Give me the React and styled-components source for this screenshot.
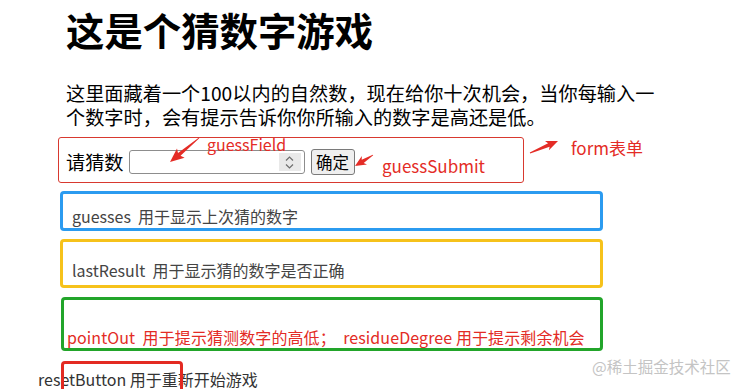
import React from "react";
import styled, { createGlobalStyle } from "styled-components";

const GlobalStyle = createGlobalStyle`
  html, body { margin: 0; padding: 0; background: #ffffff; }
  body { font-family: "Noto Sans CJK SC", "Noto Sans", sans-serif; }
`;

const FONT = `"Noto Sans CJK SC", "Noto Sans", sans-serif`;
const RED = "#e42c26";

const Page = styled.div`
  position: relative;
  width: 745px;
  height: 389px;
  overflow: hidden;
  background: #fff;
  font-family: ${FONT};
  color: #000;
  display: flex;
  flex-direction: column;
`;

const Content = styled.div`
  padding-left: 66px;
  width: 600px;
`;

const Title = styled.h1`
  margin: 6px 0 0;
  font-size: 38.4px;
  line-height: 46px;
  font-weight: 700;
`;

const Intro = styled.p`
  margin: 29px 0 0;
  font-size: 19.2px;
  line-height: 24px;
`;

const FormBox = styled.form`
  box-sizing: border-box;
  margin: 8px 0 0 58px;
  width: 466px;
  height: 47px;
  border: 1.5px solid #d8392f;
  border-radius: 3px;
  display: flex;
  align-items: center;
  padding: 5px 0 0 7px;
`;

const FieldLabel = styled.label`
  font-size: 19.2px;
  line-height: 24px;
  margin-right: 5px;
`;

const InputWrap = styled.div`
  box-sizing: border-box;
  width: 176px;
  height: 24px;
  border: 1px solid #8d8d8d;
  border-radius: 3px;
  display: flex;
  align-items: stretch;
  padding: 2px 3px 2px 2px;
  background: #fff;
`;

const NumberField = styled.input`
  flex: 1;
  min-width: 0;
  border: none;
  outline: none;
  padding: 0;
  font: inherit;
  background: transparent;
`;

const Spinner = styled.div`
  width: 22px;
  background: #e9e9e9;
  display: flex;
  flex-direction: column;
  align-items: center;
  justify-content: center;
  gap: 3px;
`;

const SubmitButton = styled.button`
  box-sizing: border-box;
  margin-left: 6px;
  width: 44px;
  height: 26px;
  padding: 0;
  border: 1px solid #7a7a7a;
  border-radius: 3px;
  background: #efefef;
  font-family: ${FONT};
  font-size: 16.5px;
  line-height: 22px;
  color: #000;
`;

const NoteBox = styled.div`
  box-sizing: border-box;
  margin: ${(p) => p.$gap}px 0 0 ${(p) => p.$left}px;
  width: ${(p) => 603 - p.$left}px;
  height: ${(p) => p.$h}px;
  border: 3px solid ${(p) => p.$color};
  border-radius: 4px;
  display: flex;
  align-items: flex-end;
  padding: 0 0 ${(p) => p.$pb}px ${(p) => p.$pl}px;
  font-size: 16px;
  line-height: 20px;
  letter-spacing: ${(p) => p.$ls || 0}px;
  color: ${(p) => p.$text || "#444"};
  white-space: pre;
`;

const ResetRow = styled.div`
  position: relative;
  margin-top: 18px;
  padding-left: 38px;
  font-size: 16px;
  line-height: 20px;
  color: #333;
  white-space: pre;
`;

const ResetMark = styled.div`
  position: absolute;
  left: 61px;
  top: -8px;
  width: 122px;
  height: 40px;
  box-sizing: border-box;
  border: 3px solid #e32a22;
  border-radius: 4px;
`;

const Watermark = styled.div`
  position: absolute;
  left: 592px;
  top: 356px;
  font-size: 15.5px;
  line-height: 20px;
  color: #c4c4c4;
  white-space: nowrap;
`;

const Callout = styled.div`
  position: absolute;
  left: ${(p) => p.$x}px;
  top: ${(p) => p.$y}px;
  font-size: ${(p) => p.$size}px;
  line-height: ${(p) => p.$size}px;
  color: ${RED};
  white-space: nowrap;
`;

const Overlay = styled.svg`
  position: absolute;
  left: 0;
  top: 0;
  pointer-events: none;
`;

function arrowPoints(x1, y1, x2, y2, head = 11, wing = 5.5) {
  const dx = x2 - x1;
  const dy = y2 - y1;
  const L = Math.hypot(dx, dy);
  const ux = dx / L;
  const uy = dy / L;
  const nx = -uy;
  const ny = ux;
  const bx = x2 - ux * head;
  const by = y2 - uy * head;
  const wx = bx - ux * 2;
  const wy = by - uy * 2;
  const t0 = 0.4;
  const t1 = 1.9;
  const pts = [
    [x1 + nx * t0, y1 + ny * t0],
    [bx + nx * t1, by + ny * t1],
    [wx + nx * wing, wy + ny * wing],
    [x2, y2],
    [wx - nx * wing, wy - ny * wing],
    [bx - nx * t1, by - ny * t1],
    [x1 - nx * t0, y1 - ny * t0],
  ];
  return pts.map((p) => p.map((v) => v.toFixed(1)).join(",")).join(" ");
}

const Arrow = ({ from, to, head, wing }) => (
  <polygon points={arrowPoints(from[0], from[1], to[0], to[1], head, wing)} fill={RED} />
);

const Chevron = ({ up }) => (
  <svg width="9" height="5" viewBox="0 0 9 5">
    <path
      d={up ? "M1 4.5 L4.5 1 L8 4.5" : "M1 0.5 L4.5 4 L8 0.5"}
      fill="none"
      stroke="#6d6d6d"
      strokeWidth="1.2"
    />
  </svg>
);

export default function App() {
  return (
    <>
      <GlobalStyle />
      <Page>
        <Content>
          <Title>这是个猜数字游戏</Title>
          <Intro>
            这里面藏着一个100以内的自然数，现在给你十次机会，当你每输入一个数字时，会有提示告诉你你所输入的数字是高还是低。
          </Intro>
        </Content>

        <FormBox onSubmit={(e) => e.preventDefault()}>
          <FieldLabel htmlFor="guessField">请猜数</FieldLabel>
          <InputWrap>
            <NumberField id="guessField" type="text" />
            <Spinner>
              <Chevron up />
              <Chevron />
            </Spinner>
          </InputWrap>
          <SubmitButton type="button">确定</SubmitButton>
        </FormBox>

        <NoteBox $gap={8} $left={60} $h={41} $pb={2} $pl={9} $color="#2b9bf0">
          {"guesses  用于显示上次猜的数字"}
        </NoteBox>
        <NoteBox $gap={8} $left={60} $h={50} $pb={5} $pl={9} $color="#f6c21b">
          {"lastResult  用于显示猜的数字是否正确"}
        </NoteBox>
        <NoteBox $gap={9} $left={61} $h={56} $pb={1} $pl={3} $ls={0.1} $color="#22a52a" $text="#e32b25">
          {"pointOut  用于提示猜测数字的高低；  residueDegree 用于提示剩余机会"}
        </NoteBox>

        <ResetRow>
          {"resetButton 用于重新开始游戏"}
          <ResetMark />
        </ResetRow>

        <Watermark>@稀土掘金技术社区</Watermark>

        <Callout $x={207} $y={136} $size={16}>guessField</Callout>
        <Callout $x={382} $y={157} $size={17}>guessSubmit</Callout>
        <Callout $x={571} $y={139} $size={17}>form表单</Callout>

        <Overlay width="745" height="389" viewBox="0 0 745 389">
          <Arrow from={[199, 138]} to={[170, 162]} head={12} wing={6} />
          <Arrow from={[373, 155]} to={[355, 166]} head={9} wing={5} />
          <Arrow from={[530, 153]} to={[558, 141]} head={10} wing={5} />
        </Overlay>
      </Page>
    </>
  );
}
